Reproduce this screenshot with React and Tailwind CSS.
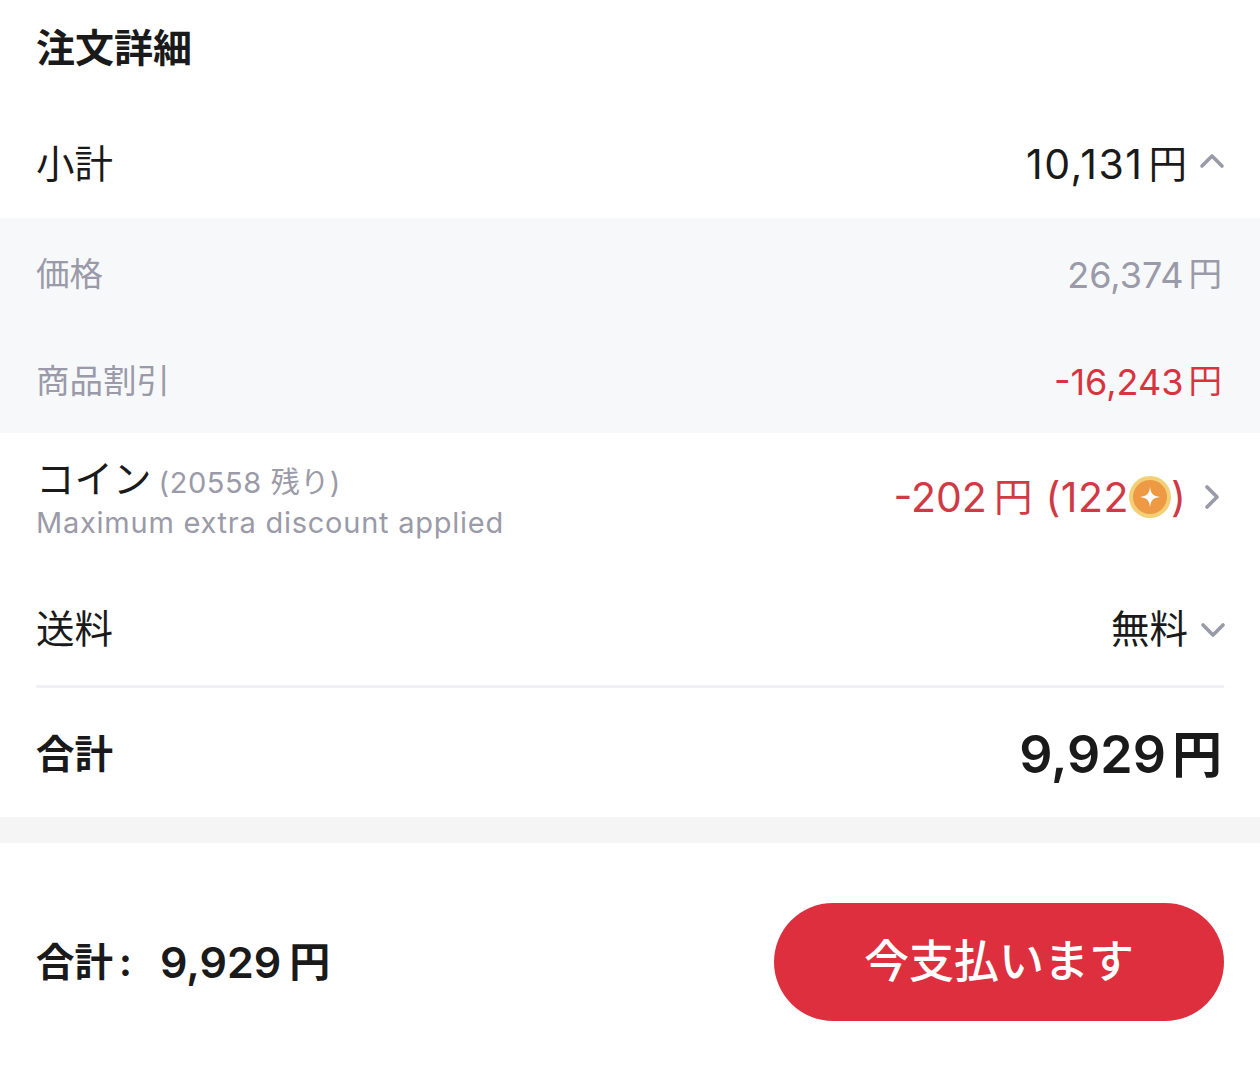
import { ChevronDown, ChevronRight, ChevronUp } from "lucide-react";

const font = { fontFamily: '"Inter", "Noto Sans CJK JP", sans-serif' };

function Coin() {
  return (
    <svg viewBox="0 0 42 42" className="w-[42px] h-[42px] shrink-0">
      <circle cx="21" cy="21" r="21" fill="#f3cf76" />
      <circle cx="21" cy="21" r="17" fill="#ee9a45" />
      <path d="M21 11 C22 18 24 20 31 21 C24 22 22 24 21 31 C20 24 18 22 11 21 C18 20 20 18 21 11 Z" fill="#fff" />
    </svg>
  );
}

// digits run a bit larger than the yen sign beside them
function Yen({ value, digits, gap = "ml-[5px]" }) {
  return (
    <span className="flex items-center">
      <span className={digits}>{value}</span>
      <span className={gap}>円</span>
    </span>
  );
}

export default function App() {
  return (
    <div style={font} className="w-[1260px] h-[1078px] bg-white text-[#1a1a1a] overflow-hidden">
      <h2 className="h-[94px] pl-[36px] flex items-center text-[39px] font-bold leading-none">注文詳細</h2>

      <div className="h-[124px] pl-[36px] pr-[36px] flex items-center justify-between text-[38.5px] leading-none pt-[16px]">
        <span>小計</span>
        <span className="flex items-center">
          <Yen value="10,131" digits="text-[41px] tracking-[1.5px]" />
          <ChevronUp className="w-[40px] h-[40px] ml-[5px] -mr-[8px] -mt-[7px] text-[#9a9aa8]" strokeWidth={2.2} />
        </span>
      </div>

      <div className="h-[215px] bg-[#f7f8fa] pl-[36px] pr-[38px] flex flex-col text-[33.5px] leading-none text-[#9a9aa8]">
        <div className="h-[110px] pt-[4px] flex items-center justify-between">
          <span>価格</span>
          <Yen value="26,374" digits="text-[36px]" />
        </div>
        <div className="h-[105px] pt-[2px] flex items-center justify-between">
          <span>商品割引</span>
          <span className="text-[#d8343f]">
            <Yen value="-16,243" digits="text-[36px]" />
          </span>
        </div>
      </div>

      <div className="h-[132px] pl-[36px] pr-[36px] flex items-center justify-between">
        <div className="flex flex-col">
          <div className="flex items-baseline h-[46px] pt-[3px]">
            <span className="text-[38.5px] leading-none">コイン</span>
            <span className="ml-[7px] text-[29px] leading-none tracking-[0.6px] text-[#9a9aa8]">(20558 残り)</span>
          </div>
          <span className="mt-[2px] text-[29px] leading-[36px] tracking-[0.75px] text-[#9a9aa8]">Maximum extra discount applied</span>
        </div>
        <span className="flex items-center text-[38.5px] leading-none text-[#cf3a45] -mt-[4px]">
          <Yen value="-202" digits="text-[41px]" gap="ml-[7px]" />
          <span className="ml-[13px] text-[41px] tracking-[0.5px]">(122</span>
          <Coin />
          <span className="text-[41px]">)</span>
          <ChevronRight className="w-[40px] h-[40px] ml-[6px] -mr-[8px] text-[#9a9aa8]" strokeWidth={2.2} />
        </span>
      </div>

      <div className="mx-[36px] border-b-[3px] border-[#f1f1f3]">
        <div className="h-[120px] pt-[8px] flex items-center justify-between text-[38.5px] leading-none">
          <span>送料</span>
          <span className="flex items-center">
            無料
            <ChevronDown className="w-[40px] h-[40px] ml-[5px] -mr-[9px] mt-[2px] text-[#9a9aa8]" strokeWidth={2.2} />
          </span>
        </div>
      </div>

      <div className="h-[129px] pl-[36px] pr-[38px] pt-[4px] flex items-center justify-between font-bold leading-none">
        <span className="text-[38.5px]">合計</span>
        <span className="text-[50px]">
          <Yen value="9,929" digits="text-[52px] font-semibold" gap="ml-[6px]" />
        </span>
      </div>

      <div className="h-[26px] bg-[#f5f5f5]" />

      <div className="h-[237px] pl-[36px] pr-[36px] flex items-center justify-between">
        <span className="flex items-center font-bold leading-none pt-[2px]">
          <span className="text-[38.5px]">合計</span>
          <span className="ml-[6px] text-[38.5px]">:</span>
          <span className="ml-[28px] text-[41px]">
            <Yen value="9,929" digits="text-[43px] font-semibold" gap="ml-[8px]" />
          </span>
        </span>
        <button className="w-[450px] h-[118px] rounded-[59px] bg-[#dd2f3e] text-white text-[45px] font-medium leading-none flex items-center justify-center">
          今支払います
        </button>
      </div>
    </div>
  );
}
